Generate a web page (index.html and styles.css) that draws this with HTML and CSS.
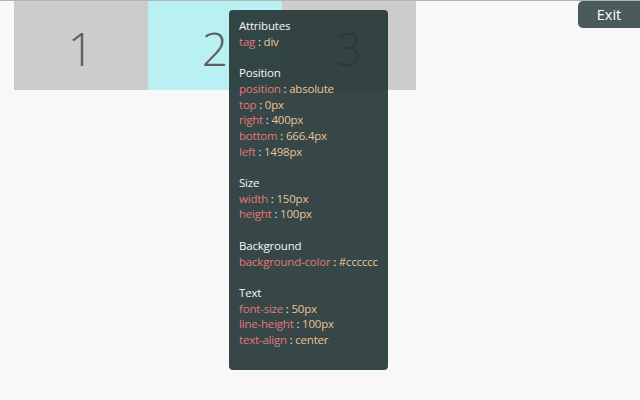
FILE: index.html
```html
<!DOCTYPE html>
<html>
<head>
<meta charset="utf-8">
<link rel="stylesheet" href="styles.css">
</head>
<body>
<div class="page">
  <div class="row">
    <div class="box box-grey">1</div>
    <div class="box box-cyan">2</div>
    <div class="box box-grey">3</div>
  </div>
  <button class="exit">Exit</button>
  <div class="tip">
    <div class="sec">
      <div class="title">Attributes</div>
      <div class="line"><span class="k">tag</span> : <span class="v">div</span></div>
    </div>
    <div class="sec">
      <div class="title">Position</div>
      <div class="line"><span class="k">position</span> : <span class="v">absolute</span></div>
      <div class="line"><span class="k">top</span> : <span class="v">0px</span></div>
      <div class="line"><span class="k">right</span> : <span class="v">400px</span></div>
      <div class="line"><span class="k">bottom</span> : <span class="v">666.4px</span></div>
      <div class="line"><span class="k">left</span> : <span class="v">1498px</span></div>
    </div>
    <div class="sec">
      <div class="title">Size</div>
      <div class="line"><span class="k">width</span> : <span class="v">150px</span></div>
      <div class="line"><span class="k">height</span> : <span class="v">100px</span></div>
    </div>
    <div class="sec">
      <div class="title">Background</div>
      <div class="line"><span class="k">background-color</span> : <span class="v">#cccccc</span></div>
    </div>
    <div class="sec">
      <div class="title">Text</div>
      <div class="line"><span class="k">font-size</span> : <span class="v">50px</span></div>
      <div class="line"><span class="k">line-height</span> : <span class="v">100px</span></div>
      <div class="line"><span class="k">text-align</span> : <span class="v">center</span></div>
    </div>
  </div>
</div>
</body>
</html>
```

FILE: styles.css
```css
html, body {
  margin: 0;
  padding: 0;
  background: #f8f8f8;
  font-family: "Open Sans", "Noto Sans", sans-serif;
}
.page {
  position: relative;
  width: 640px;
  height: 400px;
  border-top: 1px solid #b4b4b4;
  box-sizing: border-box;
}
.row {
  display: flex;
  margin-left: 14px;
}
.box {
  width: 134px;
  height: 89px;
  line-height: 94px;
  text-align: center;
  font-size: 46px;
  font-weight: 300;
  color: #5e5e5e;
}
.box-grey { background: #cccccc; }
.box-cyan { background: #b9f1f2; }
.exit {
  position: absolute;
  top: 0;
  right: 0;
  width: 62px;
  height: 27px;
  border: none;
  border-radius: 5px 0 0 5px;
  background: #4b5b5b;
  color: #ffffff;
  font-family: inherit;
  font-size: 14.5px;
  padding: 0 0 1px 0;
}
.tip {
  position: absolute;
  left: 229px;
  top: 9px;
  width: 159px;
  height: 360px;
  box-sizing: border-box;
  padding: 8px 10px;
  background: rgba(38, 54, 54, 0.92);
  border-radius: 4px;
  font-size: 11.5px;
  letter-spacing: -0.2px;
  line-height: 15.7px;
  color: #eeeeee;
}
.sec + .sec { margin-top: 15.7px; }
.title { color: #f6f6f6; }
.line { color: #f0f0f0; white-space: nowrap; }
.k { color: #e07a7a; }
.v { color: #e8c49a; }
```
